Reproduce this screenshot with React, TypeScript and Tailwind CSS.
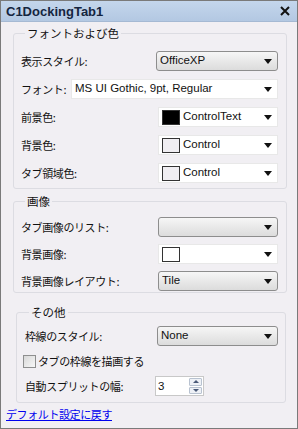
import React from "react"

const jp = "font-['Noto_Sans_CJK_JP','Noto_Sans',sans-serif]"
const latin = "font-['Liberation_Sans','Noto_Sans_CJK_JP',sans-serif]"

const Arrow = () => (
    <svg width="8" height="5" viewBox="0 0 8 5" className="shrink-0">
        <path d="M0 0 H8 L4 5 Z" fill="#111" />
    </svg>
)

type ComboProps = {
    text?: string
    kind: "3d" | "flat"
    swatch?: string
    w?: string
}

const Combo = ({ text, kind, swatch, w = "w-[120px]" }: ComboProps) => {
    const look =
        kind === "3d"
            ? "bg-gradient-to-b from-[#f6f6f6] to-[#dcdcdc] border border-[#8d8d8d] rounded-[3px]"
            : "bg-white border border-[#e8e8e8]"
    return (
        <div className={`${w} h-[20px] shrink-0 ${look} flex items-center pl-[3px] pr-[5px] gap-[3px]`}>
            {swatch && <span className="w-[18px] h-[15px] border border-[#333] shrink-0" style={{ background: swatch }} />}
            <span className={`flex-1 text-[11.5px] text-[#111] leading-none whitespace-nowrap overflow-hidden ${latin}`}>{text}</span>
            <Arrow />
        </div>
    )
}

const Label = ({ children, className }: { children: React.ReactNode; className?: string }) => (
    <span className={`text-[11px] tracking-[-0.4px] text-[#111] leading-none whitespace-nowrap ${className ?? ""}`}>{children}</span>
)

const Row = ({ label, children }: { label: string; children: React.ReactNode }) => (
    <div className="h-[20px] flex items-center justify-between">
        <Label>{label}</Label>
        {children}
    </div>
)

const Group = ({ title, children, className }: { title: string; children: React.ReactNode; className?: string }) => (
    <fieldset className={`border border-[#dcdce2] rounded-[3px] min-w-0 ${className ?? ""}`}>
        <legend className="text-[11.5px] text-[#111] px-[2px] ml-[4px] leading-[14px] h-[14px]">{title}</legend>
        {children}
    </fieldset>
)

export default function App() {
    return (
        <div className={`w-[298px] h-[429px] border border-[#7a7a7a] bg-[#f1eff3] flex flex-col ${jp}`}>
            <div className="h-[21px] shrink-0 bg-gradient-to-b from-[#c4d6ec] to-[#b3c8e2] border-b border-[#a5b9d3] flex items-center justify-between px-[5px]">
                <span className="font-['Liberation_Sans',sans-serif] font-bold text-[13px] leading-none text-[#15253f]">C1DockingTab1</span>
                <svg width="10" height="10" viewBox="0 0 10 10" className="mr-[2px]">
                    <path d="M1 1 L9 9 M9 1 L1 9" stroke="#111" strokeWidth="2" />
                </svg>
            </div>

            <div className="flex flex-col pt-[4px]">
                <Group title="フォントおよび色" className="ml-[12px] mr-[10px] pl-[7px] pr-[8px] pb-[5px]">
                    <div className="flex flex-col gap-[8px] pt-[11px]">
                        <Row label="表示スタイル:">
                            <Combo kind="3d" text="OfficeXP" w="w-[122px]" />
                        </Row>
                        <Row label="フォント:">
                            <Combo kind="flat" text="MS UI Gothic, 9pt, Regular" w="w-[207px]" />
                        </Row>
                        <Row label="前景色:">
                            <Combo kind="flat" text="ControlText" swatch="#000" />
                        </Row>
                        <Row label="背景色:">
                            <Combo kind="flat" text="Control" swatch="#f0eef2" />
                        </Row>
                        <Row label="タブ領域色:">
                            <Combo kind="flat" text="Control" swatch="#f0eef2" />
                        </Row>
                    </div>
                </Group>

                <Group title="画像" className="ml-[12px] mr-[10px] pl-[7px] pr-[8px] pb-[1px] mt-[5px]">
                    <div className="flex flex-col gap-[7px] pt-[9px]">
                        <Row label="タブ画像のリスト:">
                            <Combo kind="3d" />
                        </Row>
                        <Row label="背景画像:">
                            <Combo kind="flat" swatch="#fff" />
                        </Row>
                        <Row label="背景画像レイアウト:">
                            <Combo kind="3d" text="Tile" />
                        </Row>
                    </div>
                </Group>

                <Group title="その他" className="ml-[15px] mr-[11px] pl-[8px] pr-[7px] pb-[6px] mt-[12px]">
                    <div className="flex flex-col pt-[7px]">
                        <Row label="枠線のスタイル:">
                            <Combo kind="3d" text="None" w="w-[121px]" />
                        </Row>
                        <div className="h-[13px] flex items-center gap-[2px] mt-[9px] -ml-[2px]">
                            <span className="w-[13px] h-[13px] border border-[#8e8f8f] bg-gradient-to-br from-[#d8d8d8] to-[#f8f8f8] shrink-0" />
                            <Label>タブの枠線を描画する</Label>
                        </div>
                        <div className="h-[20px] flex items-center mt-[8px]">
                            <Label className="w-[130px]">自動スプリットの幅:</Label>
                            <div className="w-[49px] h-[20px] bg-white border border-[#c8c8c8] flex">
                                <span className={`flex-1 text-[11.5px] leading-[18px] pl-[2px] text-[#111] ${latin}`}>3</span>
                                <div className="w-[15px] flex flex-col p-[1px] gap-[1px]">
                                    <div className="flex-1 bg-[#eef1f6] border border-[#b8c2d0] rounded-[1px] flex items-center justify-center">
                                        <svg width="6" height="3" viewBox="0 0 6 3"><path d="M0 3 L3 0 L6 3 Z" fill="#4a5a78" /></svg>
                                    </div>
                                    <div className="flex-1 bg-[#eef1f6] border border-[#b8c2d0] rounded-[1px] flex items-center justify-center">
                                        <svg width="6" height="3" viewBox="0 0 6 3"><path d="M0 0 L6 0 L3 3 Z" fill="#4a5a78" /></svg>
                                    </div>
                                </div>
                            </div>
                        </div>
                    </div>
                </Group>
            </div>

            <a className="text-[11px] tracking-[-0.4px] text-[#0000ee] underline ml-[5px] mt-[3px] w-fit leading-[16px]">デフォルト設定に戻す</a>
        </div>
    )
}
